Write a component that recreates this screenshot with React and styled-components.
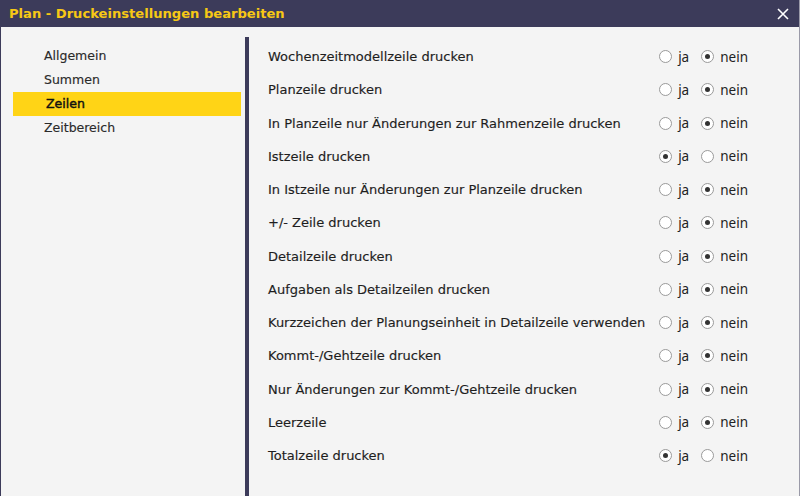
import React, { useState } from "react";
import styled, { createGlobalStyle } from "styled-components";

const GlobalStyle = createGlobalStyle`
    html, body {
        margin: 0;
        padding: 0;
        background: #f4f4f4;
    }
`;

const options = [
    { label: "Wochenzeitmodellzeile drucken", value: false },
    { label: "Planzeile drucken", value: false },
    { label: "In Planzeile nur Änderungen zur Rahmenzeile drucken", value: false },
    { label: "Istzeile drucken", value: true },
    { label: "In Istzeile nur Änderungen zur Planzeile drucken", value: false },
    { label: "+/- Zeile drucken", value: false },
    { label: "Detailzeile drucken", value: false },
    { label: "Aufgaben als Detailzeilen drucken", value: false },
    { label: "Kurzzeichen der Planungseinheit in Detailzeile verwenden", value: false },
    { label: "Kommt-/Gehtzeile drucken", value: false },
    { label: "Nur Änderungen zur Kommt-/Gehtzeile drucken", value: false },
    { label: "Leerzeile", value: false },
    { label: "Totalzeile drucken", value: true },
];

const navItems = ["Allgemein", "Summen", "Zeilen", "Zeitbereich"];

function Radio({ checked, label, onClick }) {
    return (
        <RadioLabel onClick={onClick}>
            <RadioCircle checked={checked} />
            {label}
        </RadioLabel>
    );
}

export default function App() {
    const [active, setActive] = useState("Zeilen");
    const [values, setValues] = useState(options.map((o) => o.value));

    const setValue = (index, value) => {
        const next = [...values];
        next[index] = value;
        setValues(next);
    };

    return (
        <Window>
            <GlobalStyle />
            <TitleBar>
                <Title>Plan - Druckeinstellungen bearbeiten</Title>
                <CloseButton aria-label="Schließen">
                    <svg width="12" height="12" viewBox="0 0 12 12">
                        <path d="M1 1 L11 11 M11 1 L1 11" stroke="#ffffff" strokeWidth="1.6" />
                    </svg>
                </CloseButton>
            </TitleBar>
            <Body>
                <Sidebar>
                    {navItems.map((item) => (
                        <NavItem key={item} active={item === active} onClick={() => setActive(item)}>
                            {item}
                        </NavItem>
                    ))}
                </Sidebar>
                <Divider />
                <Content>
                    {options.map((option, index) => (
                        <Row key={option.label}>
                            <RowLabel>{option.label}</RowLabel>
                            <RadioGroup>
                                <Radio checked={values[index]} label="ja" onClick={() => setValue(index, true)} />
                                <Radio checked={!values[index]} label="nein" onClick={() => setValue(index, false)} />
                            </RadioGroup>
                        </Row>
                    ))}
                </Content>
            </Body>
        </Window>
    );
}

const Window = styled.div`
    width: 800px;
    height: 496px;
    box-sizing: border-box;
    border-left: 1px solid #3c3b5a;
    border-right: 1px solid #9a9aa8;
    background: #f4f4f4;
    display: flex;
    flex-direction: column;
    overflow: hidden;
`;

const TitleBar = styled.div`
    height: 27px;
    background: #3c3b5a;
    display: flex;
    align-items: center;
    justify-content: space-between;
    padding: 0 9px 0 8px;
    flex-shrink: 0;
`;

const Title = styled.span`
    font-family: "DejaVu Sans", sans-serif;
    font-weight: 700;
    font-size: 13.1px;
    color: #f7c815;
`;

const CloseButton = styled.div`
    width: 14px;
    height: 14px;
    display: flex;
    align-items: center;
    justify-content: center;
`;

const Body = styled.div`
    flex: 1;
    display: flex;
    min-height: 0;
`;

const Sidebar = styled.div`
    width: 228px;
    padding: 17px 4px 0 12px;
    display: flex;
    flex-direction: column;
`;

const NavItem = styled.div`
    height: 24px;
    line-height: 24px;
    padding-left: ${(p) => (p.active ? "33px" : "31px")};
    font-family: "DejaVu Sans", sans-serif;
    font-size: 12.5px;
    color: ${(p) => (p.active ? "#111111" : "#2a2a2a")};
    -webkit-text-stroke: ${(p) => (p.active ? "0.45px #111111" : "0.15px #2a2a2a")};
    background: ${(p) => (p.active ? "#ffd416" : "transparent")};
    cursor: pointer;
`;

const Divider = styled.div`
    width: 4px;
    margin-top: 10px;
    background: #3c3b5a;
    flex-shrink: 0;
`;

const Content = styled.div`
    flex: 1;
    padding: 13px 51px 0 19px;
    display: flex;
    flex-direction: column;
`;

const Row = styled.div`
    height: 33.25px;
    display: flex;
    align-items: center;
    justify-content: space-between;
`;

const RowLabel = styled.span`
    font-family: "DejaVu Sans", sans-serif;
    font-size: 13px;
    color: #1e1e1e;
    -webkit-text-stroke: 0.15px #1e1e1e;
`;

const RadioGroup = styled.div`
    display: flex;
    align-items: center;
    gap: 12px;
`;

const RadioLabel = styled.label`
    display: flex;
    align-items: center;
    gap: 6px;
    font-family: "Noto Sans", sans-serif;
    font-size: 13.5px;
    color: #222222;
    cursor: pointer;
`;

const RadioCircle = styled.span`
    width: 11px;
    height: 11px;
    border-radius: 50%;
    border: 1px solid #9a9a9a;
    background: #ffffff;
    position: relative;
    &::after {
        content: "";
        display: ${(p) => (p.checked ? "block" : "none")};
        position: absolute;
        left: 3px;
        top: 3px;
        width: 5px;
        height: 5px;
        border-radius: 50%;
        background: #333333;
    }
`;
